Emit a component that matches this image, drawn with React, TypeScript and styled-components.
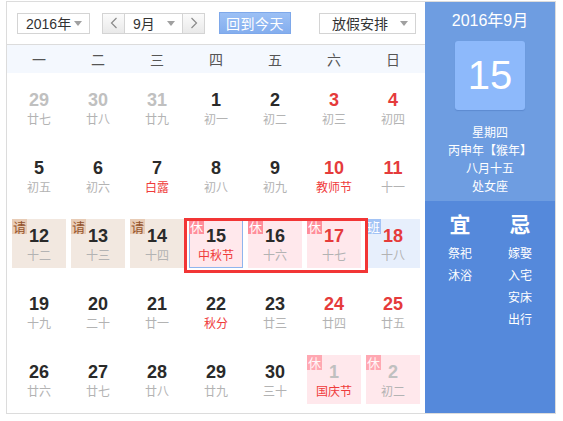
import React from 'react';
import styled, { createGlobalStyle } from 'styled-components';

type Tag = '请' | '休' | '班';

interface Day {
  d: number;
  lunar: string;
  other?: boolean;
  red?: boolean;
  lunarRed?: boolean;
  tag?: Tag;
  today?: boolean;
}

const rows: Day[][] = [
  [
    { d: 29, lunar: '廿七', other: true },
    { d: 30, lunar: '廿八', other: true },
    { d: 31, lunar: '廿九', other: true },
    { d: 1, lunar: '初一' },
    { d: 2, lunar: '初二' },
    { d: 3, lunar: '初三', red: true },
    { d: 4, lunar: '初四', red: true },
  ],
  [
    { d: 5, lunar: '初五' },
    { d: 6, lunar: '初六' },
    { d: 7, lunar: '白露', lunarRed: true },
    { d: 8, lunar: '初八' },
    { d: 9, lunar: '初九' },
    { d: 10, lunar: '教师节', red: true, lunarRed: true },
    { d: 11, lunar: '十一', red: true },
  ],
  [
    { d: 12, lunar: '十二', tag: '请' },
    { d: 13, lunar: '十三', tag: '请' },
    { d: 14, lunar: '十四', tag: '请' },
    { d: 15, lunar: '中秋节', tag: '休', lunarRed: true, today: true },
    { d: 16, lunar: '十六', tag: '休' },
    { d: 17, lunar: '十七', tag: '休', red: true },
    { d: 18, lunar: '十八', tag: '班', red: true },
  ],
  [
    { d: 19, lunar: '十九' },
    { d: 20, lunar: '二十' },
    { d: 21, lunar: '廿一' },
    { d: 22, lunar: '秋分', lunarRed: true },
    { d: 23, lunar: '廿三' },
    { d: 24, lunar: '廿四', red: true },
    { d: 25, lunar: '廿五', red: true },
  ],
  [
    { d: 26, lunar: '廿六' },
    { d: 27, lunar: '廿七' },
    { d: 28, lunar: '廿八' },
    { d: 29, lunar: '廿九' },
    { d: 30, lunar: '三十' },
    { d: 1, lunar: '国庆节', tag: '休', other: true, lunarRed: true },
    { d: 2, lunar: '初二', tag: '休', other: true },
  ],
];

const weekdays = ['一', '二', '三', '四', '五', '六', '日'];

const cellBg: Record<Tag, string> = {
  请: '#f2e8e0',
  休: '#ffe8ec',
  班: '#e7effc',
};

const badgeBg: Record<Tag, string> = {
  请: '#e8ccb6',
  休: '#ff8d9a',
  班: '#a2c3f5',
};

const badgeColor: Record<Tag, string> = {
  请: '#94532c',
  休: '#fff',
  班: '#fff',
};

const GlobalStyle = createGlobalStyle`
  body {
    margin: 0;
    background: #fff;
    font-family: "Liberation Sans", Arial, "Noto Sans CJK SC", sans-serif;
  }
`;

const Frame = styled.div`
  display: flex;
  width: 548px;
  margin: 1px 0 0 6px;
  border: 1px solid #dcdcdc;
`;

const Calendar = styled.div`
  width: 418px;
  display: flex;
  flex-direction: column;
`;

const Toolbar = styled.div`
  height: 42px;
  display: flex;
  align-items: center;
  padding-left: 10px;
  border-bottom: 1px solid #dcdcdc;
`;

const SelectBox = styled.div<{ $w: number }>`
  width: ${p => p.$w}px;
  height: 21px;
  box-sizing: border-box;
  border: 1px solid #d4d4d4;
  background: #fff;
  display: flex;
  align-items: center;
  justify-content: space-between;
  padding: 0 7px 0 8px;
  font-size: 14px;
  color: #333;
`;

const Caret = styled.span`
  width: 0;
  height: 0;
  border-left: 4px solid transparent;
  border-right: 4px solid transparent;
  border-top: 5px solid #a0a0a0;
`;

const MonthGroup = styled.div`
  display: flex;
  margin-left: 12px;
`;

const StepButton = styled.div`
  width: 23px;
  height: 21px;
  box-sizing: border-box;
  border: 1px solid #d4d4d4;
  background: linear-gradient(#fbfbfb, #e9e9e9);
  display: flex;
  align-items: center;
  justify-content: center;
`;

const MonthSelect = styled(SelectBox)`
  border-left: none;
  border-right: none;
`;

const TodayButton = styled.div`
  margin-left: 14px;
  width: 72px;
  height: 22px;
  box-sizing: border-box;
  border: 1px solid #7ea8ea;
  background: linear-gradient(#9cc0f5, #84aeee);
  color: #fff;
  font-size: 14px;
  display: flex;
  align-items: center;
  justify-content: center;
  letter-spacing: 0.5px;
`;

const HolidaySelect = styled(SelectBox)`
  margin-left: 28px;
  padding-left: 12px;
`;

const WeekRow = styled.div`
  height: 28px;
  background: #f4f8fe;
  display: grid;
  grid-template-columns: repeat(7, 54px);
  column-gap: 5px;
  padding: 0 5px;
  align-items: center;
  justify-items: center;
  font-size: 14px;
  color: #555;
`;

const DaysGrid = styled.div`
  display: grid;
  grid-template-columns: repeat(7, 54px);
  grid-template-rows: repeat(5, 49px);
  column-gap: 5px;
  row-gap: 19px;
  padding: 10px 5px 9px;
`;

const Cell = styled.div<{ $tag?: Tag; $today?: boolean; $row: number; $col: number }>`
  grid-row: ${p => p.$row};
  grid-column: ${p => p.$col};
  position: relative;
  box-sizing: border-box;
  background: ${p => (p.$tag ? cellBg[p.$tag] : 'transparent')};
  border: 1px solid ${p => (p.$today ? '#8fb5ee' : 'transparent')};
  display: flex;
  flex-direction: column;
  align-items: center;
  padding-top: 6px;
`;

const Num = styled.div<{ $color: string }>`
  font-size: 18px;
  line-height: 20px;
  font-weight: bold;
  color: ${p => p.$color};
`;

const Lunar = styled.div<{ $color: string }>`
  margin-top: 2px;
  font-family: "Noto Sans CJK SC", sans-serif;
  font-size: 12px;
  line-height: 14px;
  color: ${p => p.$color};
`;

const Badge = styled.span<{ $tag: Tag; $faded?: boolean }>`
  position: absolute;
  left: -1px;
  top: -1px;
  width: 15px;
  height: 15px;
  background: ${p => badgeBg[p.$tag]};
  color: ${p => badgeColor[p.$tag]};
  opacity: ${p => (p.$faded ? 0.7 : 1)};
  font-family: "Noto Sans CJK SC", sans-serif;
  font-size: 13px;
  line-height: 15px;
  text-align: center;
`;

const Highlight = styled.div`
  grid-column: 4 / span 3;
  grid-row: 3;
  margin: -1px -7px -5px -5px;
  border: 3px solid #f23535;
  pointer-events: none;
  z-index: 2;
`;

const Panel = styled.div`
  width: 130px;
  display: flex;
  flex-direction: column;
  color: #fff;
  font-family: "Noto Sans CJK SC", sans-serif;
`;

const PanelTop = styled.div`
  background: #6e9de1;
  display: flex;
  flex-direction: column;
  align-items: center;
  padding: 9px 0 6px;
`;

const PanelTitle = styled.div`
  font-family: "Liberation Sans", Arial, "Noto Sans CJK SC", sans-serif;
  font-size: 16px;
  line-height: 20px;
`;

const DateBox = styled.div`
  margin-top: 10px;
  width: 70px;
  height: 69px;
  background: #8db9fb;
  border-radius: 3px;
  box-shadow: 0 1px 1px rgba(40, 80, 160, 0.25);
  display: flex;
  align-items: center;
  justify-content: center;
  font-family: "Liberation Sans", Arial, sans-serif;
  font-size: 40px;
`;

const InfoList = styled.div`
  margin-top: 13px;
  text-align: center;
  font-size: 12px;
  line-height: 18px;
`;

const PanelBottom = styled.div`
  flex: 1;
  background: #5589db;
  display: grid;
  grid-template-columns: 60px 60px;
  justify-content: center;
  align-content: start;
  padding-top: 10px;
`;

const AdviceColumn = styled.div`
  display: flex;
  flex-direction: column;
  align-items: center;
`;

const AdviceHead = styled.div`
  font-size: 21px;
  line-height: 24px;
  font-weight: bold;
  margin-bottom: 7px;
`;

const AdviceItem = styled.div`
  font-size: 12px;
  line-height: 22px;
`;

const Chevron = ({ dir }: { dir: 'left' | 'right' }) => (
  <svg width="8" height="12" viewBox="0 0 8 12">
    <path
      d={dir === 'left' ? 'M6.5 1 L1.5 6 L6.5 11' : 'M1.5 1 L6.5 6 L1.5 11'}
      fill="none"
      stroke="#8a8a8a"
      strokeWidth="1.2"
    />
  </svg>
);

const numColor = (day: Day) => (day.other ? '#c0c0c0' : day.red ? '#e53b3b' : '#2a2a2a');
const lunarColor = (day: Day) => (day.lunarRed ? '#ef3b3b' : '#b3b3b3');

export default function App() {
  return (
    <>
      <GlobalStyle />
      <Frame>
        <Calendar>
          <Toolbar>
            <SelectBox $w={73}>
              <span>2016年</span>
              <Caret />
            </SelectBox>
            <MonthGroup>
              <StepButton>
                <Chevron dir="left" />
              </StepButton>
              <MonthSelect $w={57}>
                <span>9月</span>
                <Caret />
              </MonthSelect>
              <StepButton>
                <Chevron dir="right" />
              </StepButton>
            </MonthGroup>
            <TodayButton>回到今天</TodayButton>
            <HolidaySelect $w={97}>
              <span>放假安排</span>
              <Caret />
            </HolidaySelect>
          </Toolbar>
          <WeekRow>
            {weekdays.map(w => (
              <span key={w}>{w}</span>
            ))}
          </WeekRow>
          <DaysGrid>
            {rows.map((week, r) =>
              week.map((day, c) => (
                <Cell
                  key={`${r}-${c}`}
                  $row={r + 1}
                  $col={c + 1}
                  $tag={day.tag}
                  $today={day.today}
                >
                  {day.tag && (
                    <Badge $tag={day.tag} $faded={day.other}>
                      {day.tag}
                    </Badge>
                  )}
                  <Num $color={numColor(day)}>{day.d}</Num>
                  <Lunar $color={lunarColor(day)}>{day.lunar}</Lunar>
                </Cell>
              ))
            )}
            <Highlight />
          </DaysGrid>
        </Calendar>
        <Panel>
          <PanelTop>
            <PanelTitle>2016年9月</PanelTitle>
            <DateBox>15</DateBox>
            <InfoList>
              <div>星期四</div>
              <div>丙申年【猴年】</div>
              <div>八月十五</div>
              <div>处女座</div>
            </InfoList>
          </PanelTop>
          <PanelBottom>
            <AdviceColumn>
              <AdviceHead>宜</AdviceHead>
              <AdviceItem>祭祀</AdviceItem>
              <AdviceItem>沐浴</AdviceItem>
            </AdviceColumn>
            <AdviceColumn>
              <AdviceHead>忌</AdviceHead>
              <AdviceItem>嫁娶</AdviceItem>
              <AdviceItem>入宅</AdviceItem>
              <AdviceItem>安床</AdviceItem>
              <AdviceItem>出行</AdviceItem>
            </AdviceColumn>
          </PanelBottom>
        </Panel>
      </Frame>
    </>
  );
}
